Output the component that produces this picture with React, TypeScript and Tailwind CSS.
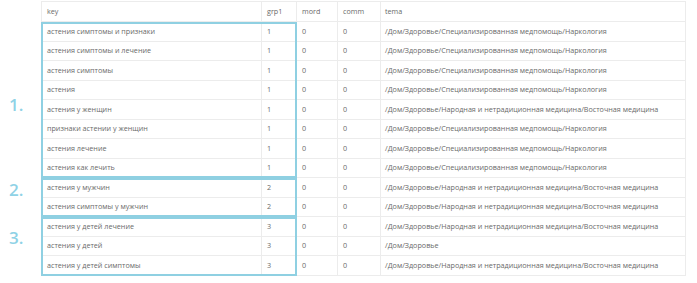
import React from "react";

type Row = [string, string, string];

const SPEC = "/Дом/Здоровье/Специализированная медпомощь/Наркология";
const NAR = "/Дом/Здоровье/Народная и нетрадиционная медицина/Восточная медицина";

const groups: { label: string; pt: string; rows: Row[] }[] = [
  {
    label: "1.",
    pt: "pt-[74px]",
    rows: [
      ["астения симптомы и признаки", "1", SPEC],
      ["астения симптомы и лечение", "1", SPEC],
      ["астения симптомы", "1", SPEC],
      ["астения", "1", SPEC],
      ["астения у женщин", "1", NAR],
      ["признаки астении у женщин", "1", SPEC],
      ["астения лечение", "1", SPEC],
      ["астения как лечить", "1", SPEC],
    ],
  },
  {
    label: "2.",
    pt: "pt-[3px]",
    rows: [
      ["астения у мужчин", "2", NAR],
      ["астения симптомы у мужчин", "2", NAR],
    ],
  },
  {
    label: "3.",
    pt: "pt-[12px]",
    rows: [
      ["астения у детей лечение", "3", NAR],
      ["астения у детей", "3", "/Дом/Здоровье"],
      ["астения у детей симптомы", "3", NAR],
    ],
  },
];

function Cells({ a, b, c, d, e }: { a: string; b: string; c: string; d: string; e: string }) {
  return (
    <>
      <div className="w-[220px] shrink-0 pl-[5px] flex items-center border-r border-[#ececec] whitespace-nowrap overflow-hidden">{a}</div>
      <div className="w-[35px] shrink-0 pl-[5px] flex items-center border-r border-[#ececec]">{b}</div>
      <div className="w-[41px] shrink-0 pl-[5px] flex items-center border-r border-[#ececec]">{c}</div>
      <div className="w-[43px] shrink-0 pl-[5px] flex items-center border-r border-[#ececec]">{d}</div>
      <div className="w-[305px] shrink-0 pl-[4px] flex items-center whitespace-nowrap overflow-hidden">{e}</div>
    </>
  );
}

export default function App() {
  return (
    <div
      className="w-[697px] h-[283px] bg-white overflow-hidden text-[7.2px] text-[#6a6a6a] pt-[1px]"
      style={{ fontFamily: '"Open Sans", "Noto Sans", sans-serif' }}
    >
      <div className="ml-[41px] w-[645px] h-[21px] flex border-t border-x border-b border-[#ececec]">
        <Cells a="key" b="grp1" c="mord" d="comm" e="tema" />
      </div>
      {groups.map((g) => (
        <div key={g.label} className="flex">
          <div className={`w-[41px] shrink-0 pl-[9px] ${g.pt}`}>
            <span className="text-[17px] leading-[17px] font-semibold text-[#8fd2e6]">{g.label}</span>
          </div>
          <div className="relative w-[645px] border-x border-[#ececec]">
            {g.rows.map((r, i) => (
              <div key={i} className="h-[19.5px] flex border-b border-[#ececec]">
                <Cells a={r[0]} b={r[1]} c="0" d="0" e={r[2]} />
              </div>
            ))}
            <div className="absolute left-[-1px] top-0 bottom-0 w-[256px] border-2 border-[#8fd0e2] pointer-events-none" />
          </div>
        </div>
      ))}
    </div>
  );
}
